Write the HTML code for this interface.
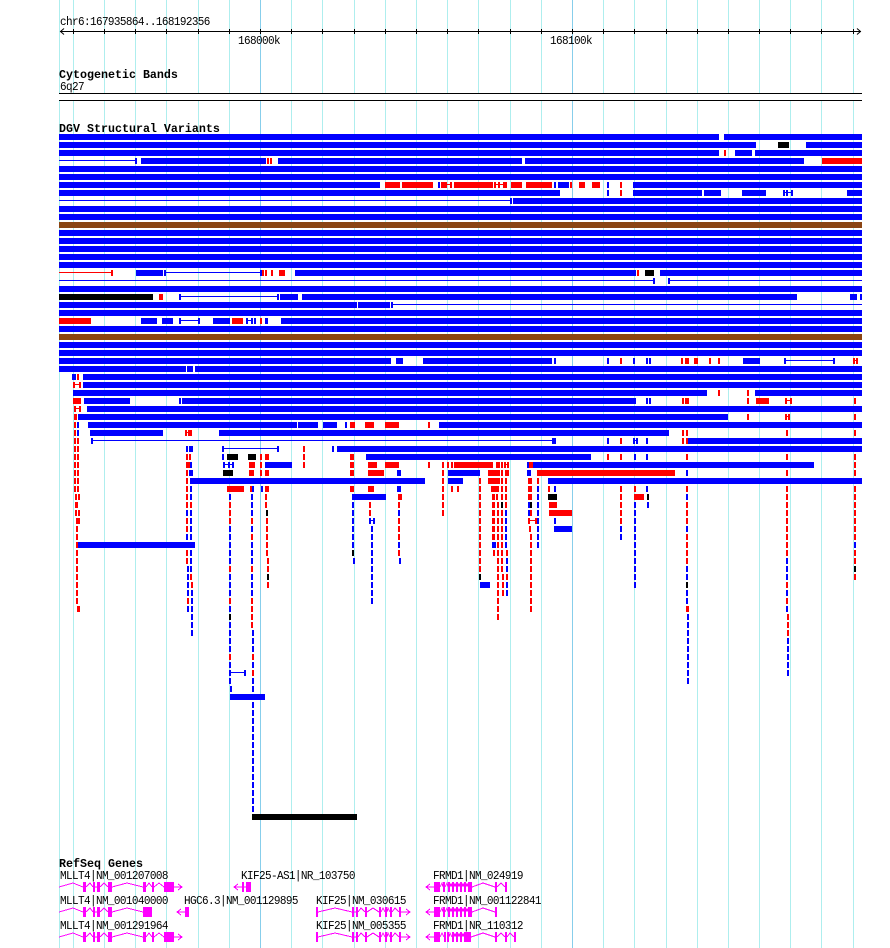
<!DOCTYPE html>
<html><head><meta charset="utf-8"><title>GBrowse</title>
<style>
html,body{margin:0;padding:0;background:#fff}
svg{display:block}
text{font-family:"Liberation Mono",monospace;font-size:11px;letter-spacing:-.6px;fill:#000}
text.b{font-weight:bold;font-size:11.67px;letter-spacing:0}
path{fill:none}
</style></head><body>
<svg width="890" height="948" viewBox="0 0 890 948" shape-rendering="crispEdges" xmlns="http://www.w3.org/2000/svg">
<rect width="890" height="948" fill="#fff"/>
<path stroke="#aeeeee" d="M59.5 0V948M73.5 0V948M104.5 0V948M135.5 0V948M166.5 0V948M198.5 0V948M229.5 0V948M291.5 0V948M322.5 0V948M354.5 0V948M385.5 0V948M416.5 0V948M447.5 0V948M478.5 0V948M510.5 0V948M541.5 0V948M603.5 0V948M634.5 0V948M666.5 0V948M697.5 0V948M728.5 0V948M759.5 0V948M790.5 0V948M821.5 0V948M853.5 0V948"/>
<path stroke="#87ceeb" d="M260.5 0V948M572.5 0V948"/>
<rect x="59" y="93" width="803" height="8" fill="#fff"/>
<path stroke="#000" d="M59 93.5H862M59 100.5H862M60 31.5H861M73.5 29V34M104.5 29V34M135.5 29V34M166.5 29V34M198.5 29V34M229.5 29V34M260.5 29V34M291.5 29V34M322.5 29V34M354.5 29V34M385.5 29V34M416.5 29V34M447.5 29V34M478.5 29V34M510.5 29V34M541.5 29V34M572.5 29V34M603.5 29V34M634.5 29V34M666.5 29V34M697.5 29V34M728.5 29V34M759.5 29V34M790.5 29V34M821.5 29V34M853.5 29V34"/>
<path stroke="#000" shape-rendering="auto" d="M64 28.5L60.5 31.5L64 34.5M857 28.5L860.5 31.5L857 34.5"/>
<text transform="translate(60 25) scale(1 1.1)">chr6:167935864..168192356</text>
<text transform="translate(238 44) scale(1 1.1)">168000k</text>
<text transform="translate(550 44) scale(1 1.1)">168100k</text>
<text class="b" x="59" y="78">Cytogenetic Bands</text>
<text transform="translate(60 90) scale(1 1.1)">6q27</text>
<text class="b" x="59" y="132">DGV Structural Variants</text>

<path stroke="#8b4513" stroke-width="6" d="M59 225H862M59 337H862"/>

<path stroke="#00f" stroke-width="6" d="M59 137H719M724 137H862
M59 145H756M806 145H862
M59 153H719M735 153H752M755 153H862
M135 161H137M141 161H266M278 161H522M525 161H804
M59 169H862M59 177H862
M59 185H380M438 185H440M554 185H556M558 185H569M607 185H609M633 185H862
M59 193H560M607 193H609M633 193H702M704 193H721M742 193H766M783 193H785M786 193H788M791 193H793M847 193H862
M510 201H512M513 201H862
M59 209H862M59 217H862M59 233H862M59 241H862M59 249H862M59 257H862M59 265H862
M136 273H163M164 273H166M260 273H262M295 273H636M660 273H862
M653 281H655M668 281H670
M59 289H862
M179 297H181M277 297H279M280 297H298M302 297H797M850 297H857M860 297H862
M59 305H357M358 305H390M391 305H393
M59 313H862
M141 321H157M162 321H173M179 321H181M198 321H200M213 321H230M246 321H248M251 321H253M254 321H256M265 321H268M281 321H862
M59 329H862M59 345H862M59 353H862
M59 361H391M396 361H403M423 361H552M554 361H556M607 361H609M633 361H635M646 361H648M649 361H651M743 361H760M784 361H786M833 361H835
M59 369H186M187 369H193M195 369H862
M72 377H76M83 377H862
M83 385H862
M73 393H707M755 393H862
M84 401H130M179 401H181M182 401H636M646 401H648M649 401H651
M87 409H862
M78 417H728
M77 425H79M88 425H297M298 425H318M323 425H337M345 425H347M439 425H862
M77 433H79M90 433H163M219 433H669
M91 441H93M552 441H556M607 441H609M633 441H635M636 441H638M646 441H648M688 441H862
M186 449H188M189 449H193M222 449H224M277 449H279M332 449H334M337 449H862
M222 457H224M366 457H591M634 457H636M646 457H648
M190 465H192M223 465H225M228 465H230M232 465H234M265 465H292M527 465H529M533 465H814
M189 473H193M397 473H401M448 473H480M527 473H531M686 473H688
M190 481H425M448 481H463M548 481H862
M190 489H192M252 489H254M261 489H263M397 489H401M537 489H539M554 489H556M646 489H648
M190 497H192M229 497H231M251 497H253M352 497H386M537 497H539M686 497H688
M251 505H253M352 505H354M528 505H530M537 505H539M634 505H636M647 505H649
M186 513H188M190 513H192M251 513H253M352 513H354M398 513H400M505 513H507M528 513H530M537 513H539M634 513H636
M190 521H192M352 521H354M369 521H371M373 521H375M505 521H507M537 521H539M554 521H556M634 521H636
M190 529H192M229 529H231M251 529H253M352 529H354M371 529H373M505 529H507M537 529H539M554 529H572M620 529H622M634 529H636M686 529H688
M186 537H188M190 537H192M229 537H231M352 537H354M371 537H373M505 537H507M537 537H539M620 537H622M634 537H636
M78 545H195M229 545H231M251 545H253M352 545H354M371 545H373M398 545H400M492 545H496M505 545H507M537 545H539M634 545H636M854 545H856
M190 553H192M229 553H231M251 553H253M371 553H373M634 553H636
M190 561H192M229 561H231M251 561H253M353 561H355M371 561H373M399 561H401M506 561H508M634 561H636M786 561H788
M187 569H189M190 569H192M371 569H373M506 569H508M634 569H636M686 569H688M786 569H788
M187 577H189M229 577H231M251 577H253M371 577H373M634 577H636M686 577H688M786 577H788
M187 585H189M229 585H231M251 585H253M371 585H373M480 585H490M506 585H508M634 585H636
M187 593H189M191 593H193M229 593H231M251 593H253M371 593H373M506 593H508M686 593H688M786 593H788
M191 601H193M371 601H373M686 601H688
M187 609H189M191 609H193M229 609H231M786 609H788
M191 617H193M687 617H689
M191 625H193M229 625H231M687 625H689
M191 633H193M229 633H231M252 633H254M687 633H689
M229 641H231M252 641H254M687 641H689M787 641H789
M229 649H231M252 649H254M687 649H689M787 649H789
M687 657H689M787 657H789
M229 665H231M252 665H254M687 665H689M787 665H789
M229 673H231M244 673H246M687 673H689M787 673H789
M229 681H231M252 681H254M687 681H689
M230 689H232M252 689H254
M230 697H265"/>
<path stroke="#00f" stroke-width="2" stroke-dasharray="6 2" d="M253 702V814"/>

<path stroke="#f00" stroke-width="6" d="M724 153H726
M267 161H269M270 161H272M822 161H862
M385 185H400M402 185H433M441 185H447M450 185H452M454 185H493M494 185H496M498 185H500M503 185H507M511 185H522M526 185H552M570 185H572M579 185H585M592 185H600M620 185H622
M620 193H622
M111 273H113M262 273H264M265 273H267M271 273H273M279 273H285M637 273H639
M159 297H163
M59 321H91M232 321H243M260 321H262
M620 361H622M681 361H683M685 361H689M694 361H698M709 361H711M718 361H720M853 361H855M856 361H858
M77 377H79
M73 385H75M79 385H81
M718 393H720M747 393H749
M73 401H81M682 401H684M685 401H689M747 401H749M756 401H769M785 401H787M790 401H792M854 401H856
M74 409H76M79 409H81
M74 417H77M747 417H749M785 417H787M788 417H790M854 417H856
M74 425H76M350 425H355M365 425H374M385 425H399M428 425H430
M74 433H76M185 433H187M188 433H192M682 433H684M686 433H688M786 433H788M854 433H856
M74 441H76M77 441H79M620 441H622M682 441H684M686 441H688
M74 449H76M77 449H79M303 449H305
M74 457H76M77 457H79M186 457H188M189 457H191M260 457H262M265 457H269M303 457H305M350 457H354M607 457H609M620 457H622M686 457H688M786 457H788M854 457H856
M74 465H76M77 465H79M186 465H190M249 465H255M260 465H262M303 465H305M350 465H354M368 465H377M385 465H399M428 465H430M442 465H444M447 465H449M451 465H453M454 465H493M496 465H500M501 465H503M504 465H506M507 465H509M529 465H533M854 465H856
M74 473H76M77 473H79M186 473H188M249 473H254M260 473H262M265 473H269M350 473H354M368 473H384M442 473H444M488 473H500M501 473H503M505 473H509M537 473H675M786 473H788M854 473H856
M74 481H76M77 481H79M186 481H188M442 481H444M479 481H481M488 481H500M501 481H503M505 481H507M528 481H532M537 481H539
M74 489H76M77 489H79M186 489H188M227 489H244M250 489H252M265 489H269M350 489H354M368 489H374M442 489H444M451 489H453M457 489H459M479 489H481M491 489H499M501 489H503M505 489H507M528 489H532M548 489H550M620 489H622M634 489H636M686 489H688M786 489H788M854 489H856
M75 497H77M78 497H80M186 497H188M265 497H267M398 497H402M442 497H444M479 497H481M492 497H495M496 497H498M501 497H503M505 497H507M528 497H532M620 497H622M634 497H644M786 497H788M854 497H856
M75 505H78M186 505H188M190 505H192M229 505H231M265 505H267M369 505H371M398 505H400M442 505H444M479 505H481M492 505H495M497 505H499M505 505H507M549 505H557M620 505H622M686 505H688M786 505H788M854 505H856
M75 513H77M78 513H80M229 513H231M369 513H371M442 513H444M479 513H481M492 513H495M497 513H499M501 513H503M530 513H532M549 513H572M620 513H622M686 513H688M786 513H788M854 513H856
M76 521H80M186 521H188M229 521H231M251 521H253M266 521H268M398 521H400M479 521H481M492 521H495M497 521H499M501 521H503M528 521H530M535 521H537M620 521H622M686 521H688M786 521H788M854 521H856
M76 529H78M186 529H188M266 529H268M398 529H400M479 529H481M492 529H495M497 529H499M501 529H503M529 529H531M786 529H788M854 529H856
M76 537H78M251 537H253M266 537H268M398 537H400M479 537H481M492 537H495M497 537H499M501 537H503M530 537H532M686 537H688M786 537H788M854 537H856
M76 545H78M266 545H268M479 545H481M497 545H499M501 545H503M530 545H532M686 545H688M786 545H788
M76 553H78M186 553H188M266 553H268M398 553H400M479 553H481M493 553H495M497 553H499M501 553H503M506 553H508M530 553H532M686 553H688M786 553H788M854 553H856
M76 561H78M186 561H188M267 561H269M479 561H481M497 561H499M501 561H503M530 561H532M686 561H688M854 561H856
M76 569H78M229 569H231M251 569H253M267 569H269M479 569H481M497 569H499M501 569H503M530 569H532
M76 577H78M190 577H192M497 577H499M502 577H504M506 577H508M530 577H532M854 577H856
M76 585H78M191 585H193M267 585H269M497 585H499M502 585H504M530 585H532M786 585H788
M76 593H78M497 593H499M502 593H504M530 593H532
M76 601H78M187 601H189M229 601H231M251 601H253M497 601H499M530 601H532M786 601H788
M77 609H80M251 609H253M497 609H499M530 609H532M686 609H689
M251 617H253M497 617H499M787 617H789
M251 625H253M787 625H789
M787 633H789
M229 657H231M252 657H254
M252 673H254"/>

<path stroke="#000" stroke-width="6" d="M778 145H789M645 273H654M59 297H153M227 457H238M248 457H256M223 473H233M548 497H557M647 497H649M501 505H503M530 505H532M266 513H268M352 553H354M854 569H856M267 577H269M479 577H481M686 585H688M229 617H231M252 817H357"/>

<path stroke="#00f" d="M59 160.5H135M59 200.5H510M166 272.5H260M59 280.5H653M670 280.5H862M181 296.5H277M393 304.5H862M181 320.5H198M248 320.5H251M786 360.5H833M785 192.5H791M93 440.5H552M635 440.5H636M224 448.5H277M225 464.5H232M371 520.5H373M231 672.5H244"/>
<path stroke="#f00" d="M59 272.5H111M447 184.5H450M496 184.5H498M500 184.5H503M855 360.5H856M75 384.5H79M787 400.5H790M76 408.5H79M787 416.5H788M187 432.5H188M506 464.5H507M530 520.5H535"/>

<text class="b" x="59" y="867">RefSeq Genes</text>
<text transform="translate(60 879) scale(1 1.1)">MLLT4|NM_001207008</text>
<text transform="translate(241 879) scale(1 1.1)">KIF25-AS1|NR_103750</text>
<text transform="translate(433 879) scale(1 1.1)">FRMD1|NM_024919</text>
<text transform="translate(60 904) scale(1 1.1)">MLLT4|NM_001040000</text>
<text transform="translate(184 904) scale(1 1.1)">HGC6.3|NM_001129895</text>
<text transform="translate(316 904) scale(1 1.1)">KIF25|NM_030615</text>
<text transform="translate(433 904) scale(1 1.1)">FRMD1|NM_001122841</text>
<text transform="translate(60 929) scale(1 1.1)">MLLT4|NM_001291964</text>
<text transform="translate(316 929) scale(1 1.1)">KIF25|NM_005355</text>
<text transform="translate(433 929) scale(1 1.1)">FRMD1|NR_110312</text>

<g transform="translate(0 887)">
<path stroke="#f0f" stroke-width="10" d="M83 0H86M93 0H95M97 0H100M108 0H112M143 0H146M152 0H154M164 0H174M242 0H244M246 0H251M434 0H440M443 0H445M448 0H450M452 0H454M456 0H458M460 0H462M464 0H466M468 0H472M495 0H497M505 0H507"/>
<path stroke="#f0f" d="M59 0L73 -4L83 0M86 0L90 -4L93 0M95 0H97M100 0L104 -4L108 0M112 0L127 -4L143 0M146 0L149 -4L152 0M154 0L159 -4L164 0M174 0H182M178 -3L182 0L178 3M234 0H242M238 -3L234 0L238 3M244 0H246M426 0H434M430 -3L426 0L430 3M440 0L442 -4L443 0M445 0L447 -4L448 0M450 0L451 -4L452 0M454 0L455 -4L456 0M458 0L459 -4L460 0M462 0L463 -4L464 0M466 0L467 -4L468 0M472 0L483 -4L495 0M497 0L501 -4L505 0"/>
</g>
<g transform="translate(0 912)">
<path stroke="#f0f" stroke-width="10" d="M83 0H86M93 0H95M97 0H100M108 0H112M143 0H152M185 0H189M316 0H318M352 0H354M356 0H358M365 0H367M379 0H381M385 0H387M390 0H392M399 0H401M434 0H440M443 0H445M448 0H450M452 0H454M456 0H458M460 0H462M464 0H466M468 0H472M495 0H497"/>
<path stroke="#f0f" d="M59 0L73 -4L83 0M86 0L90 -4L93 0M95 0H97M100 0L104 -4L108 0M112 0L127 -4L143 0M177 0H185M181 -3L177 0L181 3M318 0L335 -4L352 0M354 0H356M358 0L361 -4L365 0M367 0L373 -4L379 0M381 0L383 -4L385 0M387 0L388 -4L390 0M392 0L395 -4L399 0M401 0H410M406 -3L410 0L406 3M426 0H434M430 -3L426 0L430 3M440 0L442 -4L443 0M445 0L447 -4L448 0M450 0L451 -4L452 0M454 0L455 -4L456 0M458 0L459 -4L460 0M462 0L463 -4L464 0M466 0L467 -4L468 0M472 0L483 -4L495 0"/>
</g>
<g transform="translate(0 937)">
<path stroke="#f0f" stroke-width="10" d="M83 0H86M93 0H95M97 0H100M108 0H112M143 0H146M152 0H154M164 0H174M316 0H318M352 0H354M356 0H358M365 0H367M379 0H381M385 0H387M390 0H392M399 0H401M434 0H440M444 0H446M447 0H449M452 0H454M456 0H458M460 0H462M464 0H471M495 0H497M505 0H507M514 0H516"/>
<path stroke="#f0f" d="M59 0L73 -4L83 0M86 0L90 -4L93 0M95 0H97M100 0L104 -4L108 0M112 0L127 -4L143 0M146 0L149 -4L152 0M154 0L159 -4L164 0M174 0H182M178 -3L182 0L178 3M318 0L335 -4L352 0M354 0H356M358 0L361 -4L365 0M367 0L373 -4L379 0M381 0L383 -4L385 0M387 0L388 -4L390 0M392 0L395 -4L399 0M401 0H410M406 -3L410 0L406 3M426 0H434M430 -3L426 0L430 3M440 0L442 -4L444 0M449 0L450 -4L452 0M454 0L455 -4L456 0M458 0L459 -4L460 0M462 0L463 -4L464 0M471 0L483 -4L495 0M497 0L501 -4L505 0M507 0L510 -4L514 0"/>
</g>
</svg>
</body></html>
